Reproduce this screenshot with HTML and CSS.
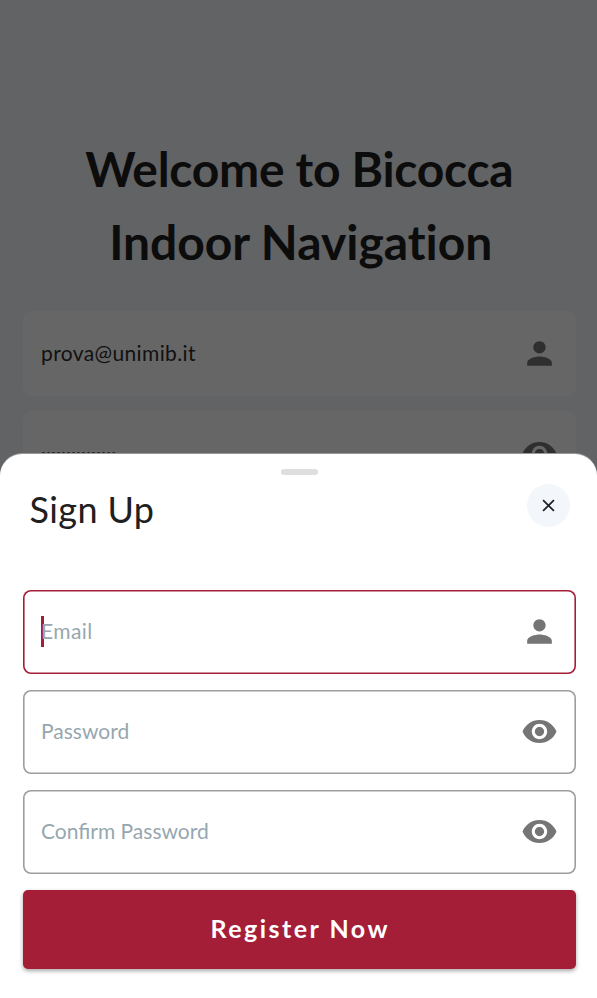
FILE: index.html
```html
<!DOCTYPE html>
<html lang="en">
<head>
<meta charset="utf-8">
<title>Bicocca Indoor Navigation</title>
<link rel="stylesheet" href="styles.css">
</head>
<body>
<svg class="defs" width="0" height="0" aria-hidden="true">
  <symbol id="person" viewBox="0 0 24 24"><path d="M12 12c2.21 0 4-1.79 4-4s-1.79-4-4-4-4 1.79-4 4 1.79 4 4 4zm0 2c-2.67 0-8 1.34-8 4v2h16v-2c0-2.66-5.33-4-8-4z"/></symbol>
  <symbol id="eye" viewBox="0 0 24 24"><path d="M12 4.5C7 4.5 2.73 7.61 1 12c1.73 4.39 6 7.5 11 7.5s9.27-3.11 11-7.5c-1.73-4.39-6-7.5-11-7.5zM12 17c-2.76 0-5-2.24-5-5s2.24-5 5-5 5 2.24 5 5-2.24 5-5 5zm0-8c-1.66 0-3 1.34-3 3s1.34 3 3 3 3-1.34 3-3-1.34-3-3-3z"/></symbol>
</svg>
<main class="login">
  <h1><span class="line-one">Welcome to Bicocca</span><br><span class="line-two">Indoor Navigation</span></h1>
  <div class="login-field"><span class="address">prova@unimib.it</span><svg class="icon"><use href="#person"/></svg></div>
  <div class="login-field"><span class="mask">•••••••••••••••</span><svg class="icon"><use href="#eye"/></svg></div>
</main>
<section class="sheet">
  <div class="handle"></div>
  <header>
    <h2>Sign Up</h2>
    <button class="close" aria-label="Close"><svg viewBox="0 0 12 12"><path d="M1 1l10 10M11 1L1 11"/></svg></button>
  </header>
  <form>
    <div class="field focused"><span class="caret"></span><span class="label email">Email</span><svg class="icon"><use href="#person"/></svg></div>
    <div class="field"><span class="label">Password</span><svg class="icon"><use href="#eye"/></svg></div>
    <div class="field"><span class="label">Confirm Password</span><svg class="icon"><use href="#eye"/></svg></div>
    <button class="register" type="button">Register Now</button>
  </form>
</section>
</body>
</html>
```
FILE: styles.css
```css
* { box-sizing: border-box; }
body {
  position: relative;
  margin: 0;
  height: 998px;
  overflow: hidden;
  background: #616365;
  font-family: Lato, "Open Sans", sans-serif;
}
.defs { position: absolute; }
.login { padding: 132px 21px 0 22.5px; }
h1 {
  margin: 0 0 33px;
  font-size: 48px;
  line-height: 73px;
  font-weight: 700;
  font-variant-ligatures: none;
  text-align: center;
  white-space: nowrap;
  color: #0c0c0c;
}
.line-one { letter-spacing: -0.3px; }
.line-two { letter-spacing: -0.03px; margin-left: 3px; }
.login-field {
  display: flex;
  align-items: center;
  justify-content: space-between;
  height: 85px;
  margin-bottom: 15px;
  padding: 0 18px 0 18.5px;
  border-radius: 8px;
  background: #666;
  color: #111;
  font-size: 21px;
}
.login-field .icon { fill: #2f2f2f; }
.address { padding-bottom: 3px; letter-spacing: 0.37px; }
.mask { font-size: 8.5px; letter-spacing: 0.08px; }
.icon { width: 37px; height: 37px; flex: none; fill: #757575; }
.sheet {
  position: absolute;
  top: 454px;
  left: 0;
  right: 0;
  bottom: 0;
  padding: 15px 21px 0 22.5px;
  border-radius: 22px 22px 0 0;
  background: #fff;
  box-shadow: 0 -1px 0 #999;
}
.handle {
  width: 37px;
  height: 6px;
  margin: 0 auto;
  border-radius: 3px;
  background: #dedede;
}
header {
  display: flex;
  justify-content: space-between;
  padding: 9px 6px 0 7px;
}
h2 {
  margin: 4px 0 0;
  font-size: 36px;
  line-height: 43px;
  font-weight: 400;
  letter-spacing: 0.4px;
  color: #202020;
}
.close {
  display: flex;
  align-items: center;
  justify-content: center;
  width: 43px;
  height: 43px;
  padding: 0;
  border: 0;
  border-radius: 50%;
  background: #f3f7fb;
}
.close svg { width: 13px; height: 13px; fill: none; stroke: #202020; stroke-width: 1.6; }
form { display: flex; flex-direction: column; gap: 16px; margin-top: 59px; }
.field {
  display: flex;
  align-items: center;
  height: 84px;
  padding: 0 18px 1px 18.5px;
  border-radius: 8px;
  box-shadow: inset 0 0 0 1.6px #9e9e9e;
  color: #96a7af;
  font-size: 21px;
}
.field .icon { margin-left: auto; }
.label { padding-bottom: 2px; }
.email { letter-spacing: 0.4px; }
.focused { box-shadow: inset 0 0 0 1.6px #a51e38; }
.caret { width: 3px; height: 31px; margin-right: -3px; background: #a51e38; }
.register {
  height: 79px;
  padding: 0 0 4px 2px;
  border: 0;
  border-radius: 5px;
  background: #a51e38;
  color: #fff;
  box-shadow: 0 2px 4px rgba(0, 0, 0, .35);
  font: 700 25px/30px Lato, sans-serif;
  letter-spacing: 2.5px;
}
```
